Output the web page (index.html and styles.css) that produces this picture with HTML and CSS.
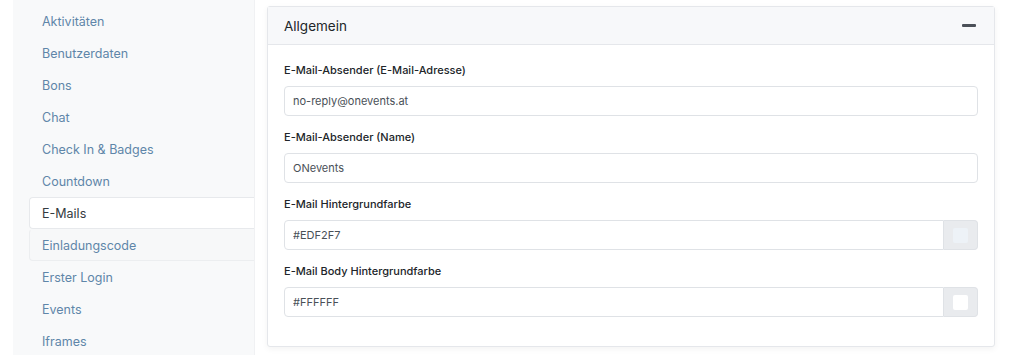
FILE: index.html
```html
<!doctype html>
<html lang="de">
  <head>
    <meta charset="UTF-8" />
    <meta name="viewport" content="width=device-width, initial-scale=1.0" />
    <title>Einstellungen - E-Mails</title>
    <link rel="stylesheet" href="styles.css">
  </head>
  <body>
    <div class="layout">
      <nav class="sidebar">
        <ul class="nav-list">
          <li><a href="#">Aktivitäten</a></li>
          <li><a href="#">Benutzerdaten</a></li>
          <li><a href="#">Bons</a></li>
          <li><a href="#">Chat</a></li>
          <li><a href="#">Check In &amp; Badges</a></li>
          <li><a href="#">Countdown</a></li>
          <li><a href="#" class="active">E-Mails</a></li>
          <li><a href="#" class="hover">Einladungscode</a></li>
          <li><a href="#">Erster Login</a></li>
          <li><a href="#">Events</a></li>
          <li><a href="#">Iframes</a></li>
        </ul>
      </nav>

      <main class="content">
        <section class="card">
          <header class="card-header">
            <h2>Allgemein</h2>
            <button class="collapse-btn" aria-expanded="true" aria-label="Einklappen">
              <span class="minus"></span>
            </button>
          </header>
          <div class="card-body">
            <div class="form-group">
              <label for="from-mail">E-Mail-Absender (E-Mail-Adresse)</label>
              <input id="from-mail" type="text" value="no-reply@onevents.at" />
            </div>
            <div class="form-group">
              <label for="from-name">E-Mail-Absender (Name)</label>
              <input id="from-name" type="text" value="ONevents" />
            </div>
            <div class="form-group">
              <label for="bg-color">E-Mail Hintergrundfarbe</label>
              <div class="input-group">
                <input id="bg-color" type="text" value="#EDF2F7" />
                <span class="addon"><i class="swatch" style="background: #EDF2F7"></i></span>
              </div>
            </div>
            <div class="form-group">
              <label for="body-color">E-Mail Body Hintergrundfarbe</label>
              <div class="input-group">
                <input id="body-color" type="text" value="#FFFFFF" />
                <span class="addon"><i class="swatch" style="background: #FFFFFF"></i></span>
              </div>
            </div>
          </div>
        </section>
      </main>
    </div>
  </body>
</html>
```

FILE: styles.css
```css
body {
  margin: 0;
  background: #fff;
  font-family: Inter, "Noto Sans", sans-serif;
  color: #212529;
}

.layout {
  display: flex;
  min-height: 355px;
}

.sidebar {
  width: 242px;
  margin-left: 13px;
  background: #f8f9fa;
  border-right: 1px solid #f0f1f3;
  padding: 5px 0 0 16px;
  box-sizing: border-box;
  flex-shrink: 0;
}

.nav-list {
  list-style: none;
  margin: 0;
  padding: 0;
}

.nav-list a {
  display: block;
  height: 32px;
  line-height: 32px;
  padding-left: 12px;
  font-size: 12.5px;
  color: #5f86a9;
  text-decoration: none;
  border: 1px solid transparent;
  border-right: 0;
  border-radius: 4px 0 0 4px;
  box-sizing: border-box;
}

.nav-list a.active {
  background: #fff;
  color: #343a40;
  border-color: #e7e9ec;
}

.nav-list a.hover {
  border-color: #eceef0;
  border-top-color: transparent;
  background: #f7f8f9;
}

.content {
  flex: 1;
  padding: 6px 29px 0 12px;
}

.card {
  border: 1px solid #e5e7eb;
  border-radius: 3px;
  background: #fff;
  box-shadow: 0 2px 6px rgba(0, 0, 0, 0.05);
}

.card-header {
  display: flex;
  align-items: center;
  justify-content: space-between;
  height: 37px;
  padding: 0 16px;
  background: #f7f8fa;
  border-bottom: 1px solid #e5e7eb;
}

.card-header h2 {
  margin: 0;
  font-size: 13.5px;
  font-weight: 400;
  color: #212529;
}

.collapse-btn {
  border: 0;
  background: none;
  padding: 0;
  width: 16px;
  height: 16px;
  display: flex;
  align-items: center;
  justify-content: center;
  margin-right: 1px;
}

.minus {
  display: block;
  width: 14px;
  height: 3px;
  border-radius: 1px;
  background: #4b5058;
}

.card-body {
  padding: 17px 16px 16px;
}

.form-group {
  margin-bottom: 13px;
}

.form-group label {
  display: block;
  font-size: 11px;
  font-weight: 500;
  line-height: 16px;
  margin-bottom: 8px;
  color: #212529;
}

.form-group input {
  display: block;
  width: 100%;
  height: 30px;
  box-sizing: border-box;
  border: 1px solid #dfe2e6;
  border-radius: 4px;
  padding: 0 8px;
  font-family: inherit;
  font-size: 11px;
  color: #495057;
  background: #fff;
}

.input-group {
  display: flex;
}

.input-group input {
  border-radius: 4px 0 0 4px;
}

.addon {
  display: flex;
  align-items: center;
  justify-content: center;
  width: 34px;
  height: 30px;
  box-sizing: border-box;
  flex-shrink: 0;
  background: #e9ebee;
  border: 1px solid #dfe2e6;
  border-left: 0;
  border-radius: 0 4px 4px 0;
}

.swatch {
  display: block;
  width: 15px;
  height: 15px;
  border-radius: 2px;
}
```
